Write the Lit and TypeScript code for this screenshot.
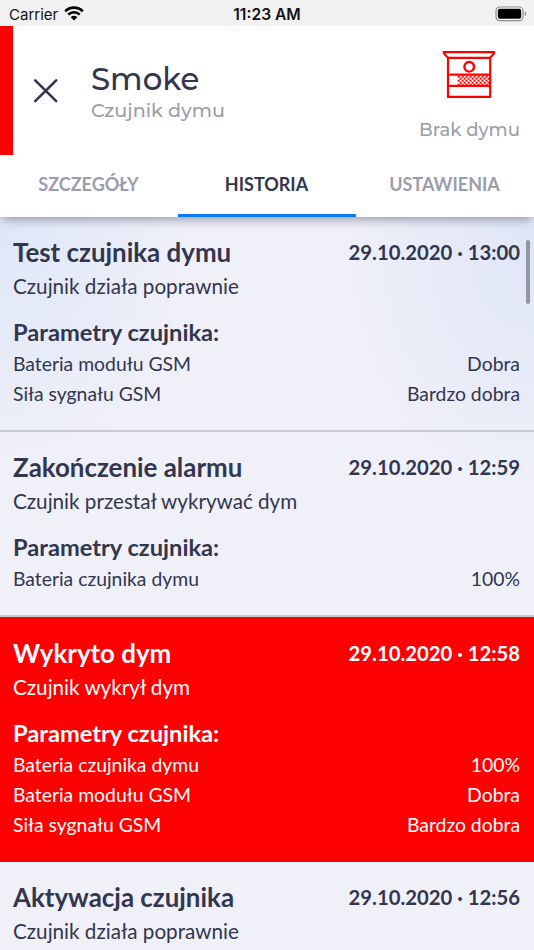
import { LitElement, html, css, svg } from "lit";
import { customElement, property } from "lit/decorators.js";
import { classMap } from "lit/directives/class-map.js";

interface HistoryItem {
  title: string;
  date: string;
  description: string;
  alarm?: boolean;
  params: [string, string][];
}

const HISTORY: HistoryItem[] = [
  {
    title: "Test czujnika dymu",
    date: "29.10.2020 · 13:00",
    description: "Czujnik działa poprawnie",
    params: [["Bateria modułu GSM", "Dobra"], ["Siła sygnału GSM", "Bardzo dobra"]],
  },
  {
    title: "Zakończenie alarmu",
    date: "29.10.2020 · 12:59",
    description: "Czujnik przestał wykrywać dym",
    params: [["Bateria czujnika dymu", "100%"]],
  },
  {
    title: "Wykryto dym",
    date: "29.10.2020 · 12:58",
    description: "Czujnik wykrył dym",
    alarm: true,
    params: [
      ["Bateria czujnika dymu", "100%"],
      ["Bateria modułu GSM", "Dobra"],
      ["Siła sygnału GSM", "Bardzo dobra"],
    ],
  },
  {
    title: "Aktywacja czujnika",
    date: "29.10.2020 · 12:56",
    description: "Czujnik działa poprawnie",
    params: [],
  },
];

@customElement("status-bar")
export class StatusBar extends LitElement {
  static styles = css`
    :host {
      display: grid;
      grid-template-columns: 1fr auto 1fr;
      align-items: center;
      height: 26px;
      padding: 0 7px 0 9px;
      box-sizing: border-box;
      background: #f1f1f1;
      color: #111;
      font: 15px/26px Inter, sans-serif;
    }
    .left { display: flex; align-items: center; gap: 6px; padding-top: 1px; }
    .time { font-weight: 600; font-size: 15.6px; padding: 2px 2px 0 0; }
    .battery { justify-self: end; display: block; }
    svg { display: block; }
    .wifi { margin-top: -2px; }
  `;
  render() {
    return html`
      <div class="left">
        <span>Carrier</span>
        <svg class="wifi" width="20" height="15" viewBox="0 0 20 15" fill="none" stroke="#000" stroke-width="2.6">
          <path d="M1.2 5.3A12.4 12.4 0 0 1 18.8 5.3" />
          <path d="M4.3 8.7A8 8 0 0 1 15.7 8.7" />
          <path d="M10 14.6L6.7 11.2A4.7 4.7 0 0 1 13.3 11.2Z" fill="#000" stroke="none" />
        </svg>
      </div>
      <span class="time">11:23 AM</span>
      <svg class="battery" width="32" height="16" viewBox="0 0 32 16">
        <rect x="1" y="1" width="27" height="13.6" rx="3.8" fill="#fff" stroke="#8b8b8b" stroke-width="1.2" />
        <rect x="2.8" y="2.8" width="23.4" height="10" rx="2" fill="#000" />
        <path d="M29.8 5.6c2 .6 2 3.8 0 4.4z" fill="#8b8b8b" />
      </svg>
    `;
  }
}

@customElement("sensor-header")
export class SensorHeader extends LitElement {
  static styles = css`
    :host {
      display: flex;
      height: 129px;
      box-sizing: border-box;
      border-left: 13px solid #f00;
      padding-right: 14px;
      background: #fff;
      font-family: Montserrat, Inter, sans-serif;
    }
    .close { width: 26px; height: 26px; margin: 52px 32px 0 20px; display: block; }
    .names { flex: 1; padding-top: 33px; white-space: nowrap; }
    .name { color: #32364e; font-size: 30.8px; line-height: 40px; font-weight: 500; }
    .kind { color: #9b9dab; font-size: 19.15px; line-height: 22px; font-weight: 500; }
    .state { display: flex; flex-direction: column; align-items: flex-end; white-space: nowrap; }
    .sensor { display: block; margin: 24px 24px 0 0; }
    .label { color: #9b9dab; font-size: 18.1px; line-height: 22px; margin-top: 18.5px; font-weight: 500; }
  `;
  private mesh() {
    const dots = [];
    for (let row = 0; row < 5; row++) {
      for (let col = 0; col < 8; col++) {
        const x = 15.6 + col * 4 + (row % 2) * 2;
        dots.push(svg`<rect x=${x} y=${25.7 + row * 2} width="2" height="2" />`);
      }
    }
    return dots;
  }
  render() {
    return html`
      <svg class="close" viewBox="0 0 26 26" stroke="#32364e" stroke-width="2.6" stroke-linecap="round">
        <path d="M2.2 2.4L23.2 23.2M23.2 2.4L2.2 23.2" />
      </svg>
      <div class="names">
        <div class="name">Smoke</div>
        <div class="kind">Czujnik dymu</div>
      </div>
      <div class="state">
        <svg class="sensor" width="54" height="50" viewBox="0 0 54 50" fill="none" stroke="#f00" stroke-width="2.2" stroke-linejoin="round">
          <path d="M1.7 2.2H52.3Q52.3 4 47.5 7.8H6.5Q1.7 4 1.7 2.2Z" />
          <path d="M6 7.8V46.8H48.2V7.8M6 24.6H48.2M6 35.8H48.2" stroke-linejoin="miter" />
          <circle cx="27.2" cy="16.8" r="4.8" stroke-width="2.4" />
          <g fill="#f00" stroke="none">${this.mesh()}</g>
        </svg>
        <div class="label">Brak dymu</div>
      </div>
    `;
  }
}

@customElement("tab-strip")
export class TabStrip extends LitElement {
  static styles = css`
    :host {
      display: grid;
      grid-template-columns: repeat(3, 1fr);
      height: 62px;
      position: relative;
      z-index: 1;
      background: #fff;
      box-shadow: 0 4px 10px -2px rgba(50, 54, 78, 0.5);
      clip-path: inset(0 0 -20px 0);
      font: 700 18px/58px Lato, sans-serif;
      color: #9b9dab;
      text-align: center;
    }
    .tab { box-sizing: border-box; border-bottom: 3px solid transparent; padding-right: 1px; }
    .active { color: #32364e; border-color: #077bf9; }
  `;
  render() {
    return html`
      <div class="tab">SZCZEGÓŁY</div>
      <div class="tab active">HISTORIA</div>
      <div class="tab">USTAWIENIA</div>
    `;
  }
}

@customElement("history-entry")
export class HistoryEntry extends LitElement {
  @property({ attribute: false }) item!: HistoryItem;
  static styles = css`
    :host { display: block; font-family: Lato, sans-serif; color: #32364e; }
    .entry { padding: 18.8px 14px 20.5px 13px; border-bottom: 2px solid #c8cad1; }
    .alarm { padding-top: 19.6px; padding-bottom: 20.2px; background: #f00; color: #fff; border-color: #f00; }
    .row { display: flex; justify-content: space-between; white-space: nowrap; }
    .head { line-height: 32px; font-weight: 700; }
    .title { font-size: 25.9px; }
    .date { font-size: 20.3px; }
    .description { margin-top: 3.2px; font-size: 20.65px; line-height: 30px; }
    .subtitle { margin: 16px 0 2.5px; font-size: 23.65px; line-height: 30px; font-weight: 700; }
    .param { font-size: 19.35px; line-height: 30px; }
  `;
  render() {
    const { title, date, description, alarm, params } = this.item;
    return html`
      <div class=${classMap({ entry: true, alarm: !!alarm })}>
        <div class="row head"><span class="title">${title}</span><span class="date">${date}</span></div>
        <div class="description">${description}</div>
        ${params.length
          ? html`<div class="subtitle">Parametry czujnika:</div>
              ${params.map(([k, v]) => html`<div class="row param"><span>${k}</span><span>${v}</span></div>`)}`
          : null}
      </div>
    `;
  }
}

@customElement("app-root")
export class AppRoot extends LitElement {
  static styles = css`
    :host { display: flex; flex-direction: column; height: 950px; overflow: hidden; background: #fff; }
    .list {
      position: relative;
      flex: 1;
      min-height: 0;
      overflow: hidden;
      background:
        radial-gradient(ellipse 200px 260px at 100% 30px, #dfe6f6 0%, rgba(223, 230, 246, 0) 100%),
        radial-gradient(ellipse 200px 240px at 0 20px, #dfe7f7 0%, rgba(223, 231, 247, 0) 100%),
        #f0f0f9;
    }
    .thumb {
      position: absolute;
      top: 23px;
      right: 4px;
      width: 4px;
      height: 64px;
      border-radius: 2px;
      background: #9297a2;
    }
  `;
  render() {
    return html`
      <status-bar></status-bar>
      <sensor-header></sensor-header>
      <tab-strip></tab-strip>
      <div class="list">
        ${HISTORY.map((item) => html`<history-entry .item=${item}></history-entry>`)}
        <div class="thumb"></div>
      </div>
    `;
  }
}
